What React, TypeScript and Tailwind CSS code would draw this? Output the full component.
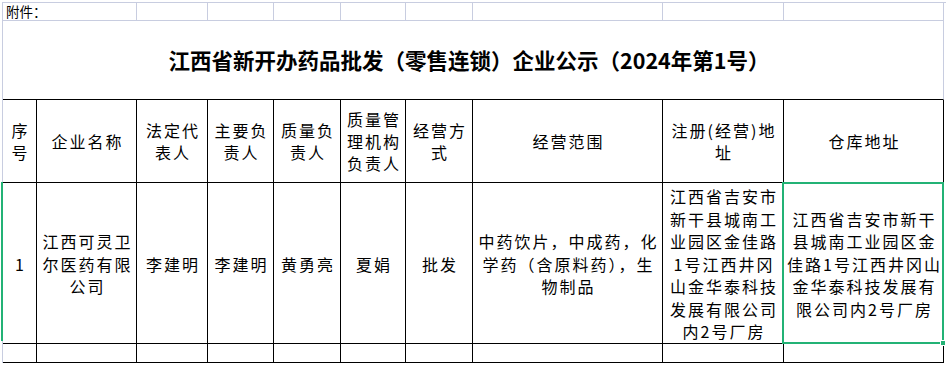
import React from 'react';

const cols = 'grid grid-cols-[34px_100px_71px_66px_67px_65px_67px_190px_121px_160px]';

const headers = [
  '序\n号',
  '企业名称',
  '法定代\n表人',
  '主要负\n责人',
  '质量负\n责人',
  '质量管\n理机构\n负责人',
  '经营方\n式',
  '经营范围',
  '注册(经营)地\n址',
  '仓库地址',
];

const row = [
  '1',
  '江西可灵卫\n尔医药有限\n公司',
  '李建明',
  '李建明',
  '黄勇亮',
  '夏娟',
  '批发',
  '中药饮片，中成药，化\n学药（含原料药），生\n物制品',
  '江西省吉安市\n新干县城南工\n业园区金佳路\n1号江西井冈\n山金华泰科技\n发展有限公司\n内2号厂房',
  '江西省吉安市新干\n县城南工业园区金\n佳路1号江西井冈山\n金华泰科技发展有\n限公司内2号厂房',
];

const App: React.FC = () => {
  return (
    <div className="w-[946px] h-[366px] bg-white overflow-hidden pt-[2px] pl-[2px] text-black [font-family:'Noto_Sans_CJK_SC','Noto_Sans',sans-serif]">
      {/* 附件 row */}
      <div className={`${cols} h-[18px] border-t border-l border-[#c8cde0]`}>
        <div className="col-span-2 border-r border-b border-[#c8cde0] text-[13.5px] leading-[17px] pl-[3px]">附件：</div>
        {Array.from({ length: 8 }).map((_, i) => (
          <div key={i} className="border-r border-b border-[#c8cde0]" />
        ))}
      </div>

      {/* title */}
      <div className={`${cols} h-[80px] border-l border-[#c8cde0]`}>
        <div className="col-span-10 border-r border-[#c8cde0] border-b border-b-black flex items-center justify-center text-[21.5px] font-bold pt-[2px] pr-[8px]">
          江西省新开办药品批发（零售连锁）企业公示（2024年第1号）
        </div>
      </div>

      {/* header */}
      <div className={`${cols} h-[83px] border-l border-[#c8cde0]`}>
        {headers.map((h, i) => (
          <div
            key={i}
            className="border-r border-b border-black flex items-center justify-center text-center whitespace-pre-line text-[16px] leading-[22px] tracking-[2px] pl-[2px]"
          >
            {h}
          </div>
        ))}
      </div>

      {/* data */}
      <div className={`${cols} h-[158px] border-l border-[#c8cde0] relative`}>
        <div className="absolute left-[-2px] top-[-1px] bottom-0 w-[2px] bg-[#23b275]" />
        {row.map((t, i) => (
          <div
            key={i}
            className="relative border-r border-b border-black flex items-center justify-center text-center whitespace-pre-line text-[16px] leading-[22.5px] tracking-[2px] pl-[2px] pt-[2px]"
          >
            {t}
            {i === 9 && (
              <div className="absolute left-[-2px] top-[-1px] right-[-1px] bottom-[-1px] border-2 border-[#23b275]">
                <div className="absolute right-[-4px] bottom-[-4px] w-[6px] h-[6px] bg-[#23b275] border border-white" />
              </div>
            )}
          </div>
        ))}
      </div>

      {/* empty row */}
      <div className={`${cols} h-[22px] border-l border-[#c8cde0]`}>
        {Array.from({ length: 10 }).map((_, i) => (
          <div key={i} className="border-r border-b border-black" />
        ))}
      </div>
    </div>
  );
};

export default App;
